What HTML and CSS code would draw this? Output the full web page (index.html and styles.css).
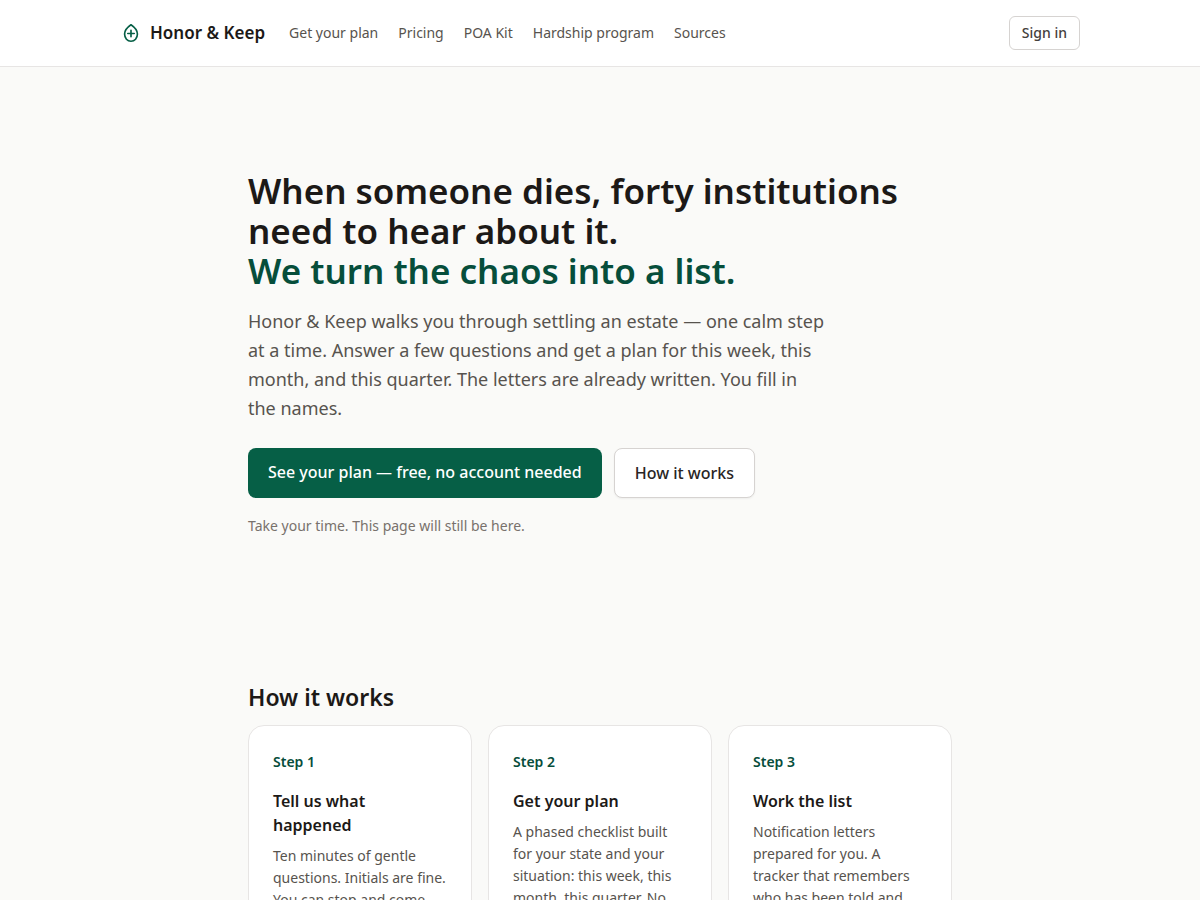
FILE: index.html
```
<!DOCTYPE html>
<html lang="en">
<head>
	<meta charset="UTF-8">
	<meta name="viewport" content="width=device-width, initial-scale=1">
	<title>Honor &amp; Keep</title>
	<link rel="stylesheet" href="styles.css">
</head>
<body>
	<header class="site-header">
		<div class="header-inner">
			<a href="#" class="brand">
				<svg class="brand-icon" viewBox="0 0 24 24" fill="none" stroke="currentColor" stroke-width="1.8" stroke-linecap="round" stroke-linejoin="round" aria-hidden="true">
					<path d="M12 3C8.200 5.600 5 9.200 5 13.200C5 17.600 8 21 12 21s7-3.400 7-7.800C19 9.200 15.800 5.600 12 3z"/>
					<path d="M12 9v7M8.500 12.500h7"/>
				</svg>
				<span>Honor &amp; Keep</span>
			</a>
			<nav class="site-nav">
				<a href="#">Get your plan</a>
				<a href="#">Pricing</a>
				<a href="#">POA Kit</a>
				<a href="#">Hardship program</a>
				<a href="#">Sources</a>
			</nav>
			<a href="#" class="sign-in">Sign in</a>
		</div>
	</header>
	<main class="page">
		<section class="hero">
			<h1>When someone dies, forty institutions need to hear about it. <span class="accent">We turn the chaos into a list.</span></h1>
			<p class="lead">Honor &amp; Keep walks you through settling an estate — one calm step at a time. Answer a few questions and get a plan for this week, this month, and this quarter. The letters are already written. You fill in the names.</p>
			<div class="actions">
				<a href="#" class="btn btn-primary">See your plan — free, no account needed</a>
				<a href="#how" class="btn btn-secondary">How it works</a>
			</div>
			<p class="note">Take your time. This page will still be here.</p>
		</section>
		<section id="how" class="how">
			<h2>How it works</h2>
			<div class="steps">
				<article class="card">
					<p class="step">Step 1</p>
					<h3>Tell us what happened</h3>
					<p>Ten minutes of gentle questions. Initials are fine. You can stop and come</p>
				</article>
				<article class="card">
					<p class="step">Step 2</p>
					<h3>Get your plan</h3>
					<p>A phased checklist built for your state and your situation: this week, this month, this quarter. No</p>
				</article>
				<article class="card">
					<p class="step">Step 3</p>
					<h3>Work the list</h3>
					<p>Notification letters prepared for you. A tracker that remembers who has been told and</p>
				</article>
			</div>
		</section>
	</main>
</body>
</html>
```

FILE: styles.css
```
* {
	box-sizing: border-box;
}

body, h1, h2, h3, p {
	margin: 0;
}

body {
	font-family: "Noto Sans", sans-serif;
	font-size: 16px;
	line-height: 24px;
	color: #1c1917;
	background: #fafaf8;
}

a {
	color: inherit;
	text-decoration: none;
}

h1, h2, h3 {
	font-weight: 600;
}

/* header */
.site-header {
	background: #fff;
	border-bottom: 1px solid #e7e5e4;
}

.header-inner {
	display: flex;
	align-items: center;
	gap: 24px;
	max-width: 1024px;
	margin: 0 auto;
	padding: 16px 32px;
}

.brand {
	display: flex;
	align-items: center;
	gap: 8px;
	font-size: 17px;
	font-weight: 600;
}

.brand-icon {
	width: 22px;
	height: 22px;
	color: #065f46;
}

.site-nav {
	display: flex;
	gap: 20px;
	font-size: 14px;
	color: #57534e;
}

.sign-in {
	margin-left: auto;
	padding: 6px 12px;
	border: 1px solid #d6d3d1;
	border-radius: 6px;
	font-size: 14px;
	font-weight: 500;
	line-height: 20px;
	color: #44403c;
}

/* hero */
.page {
	max-width: 768px;
	margin: 0 auto;
	padding: 0 32px;
}

.hero {
	padding: 104px 0 96px;
}

.hero h1 {
	font-size: 35px;
	line-height: 40px;
}

.accent {
	display: block;
	color: #064e3b;
}

.lead {
	max-width: 576px;
	margin-top: 16px;
	font-size: 18px;
	line-height: 29px;
	color: #57534e;
}

.actions {
	display: flex;
	flex-wrap: wrap;
	gap: 12px;
	margin-top: 25px;
}

.btn {
	padding: 12px 20px;
	border-radius: 8px;
	font-weight: 500;
}

.btn-primary {
	background: #065f46;
	color: #fff;
}

.btn-secondary {
	background: #fff;
	border: 1px solid #d6d3d1;
	box-shadow: 0 1px 2px rgba(0, 0, 0, 0.05);
	color: #292524;
}

.note {
	margin-top: 16px;
	font-size: 14px;
	line-height: 23px;
	color: #78716c;
}

/* steps */
.how {
	padding: 48px 0 96px;
}

.how h2 {
	font-size: 23px;
	line-height: 32px;
}

.steps {
	display: grid;
	grid-template-columns: repeat(3, 1fr);
	gap: 16px;
	margin-top: 12px;
}

.card {
	padding: 24px;
	background: #fff;
	border: 1px solid #e7e5e4;
	border-radius: 16px;
	font-size: 14px;
	line-height: 22px;
	color: #57534e;
}

.card .step {
	font-weight: 600;
	line-height: 23px;
	color: #064e3b;
}

.card h3 {
	margin: 16px 0 8px;
	font-size: 16px;
	line-height: 24px;
	color: #1c1917;
}
```
